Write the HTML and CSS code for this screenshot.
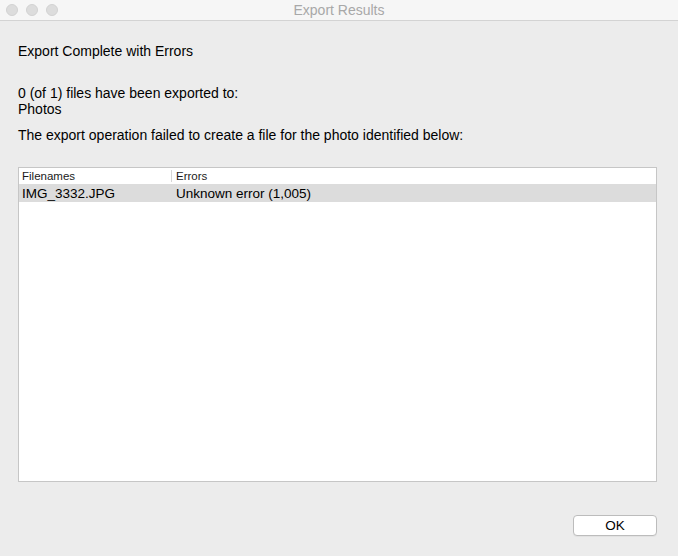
FILE: index.html
```html
<!DOCTYPE html>
<html>
<head>
<meta charset="utf-8">
<title>Export Results</title>
<link rel="stylesheet" href="styles.css">
</head>
<body>
<div class="window">
  <div class="titlebar">
    <div class="lights">
      <span class="light"></span>
      <span class="light"></span>
      <span class="light"></span>
    </div>
    <div class="title">Export Results</div>
  </div>
  <div class="content">
    <p class="heading">Export Complete with Errors</p>
    <p class="dest">0 (of 1) files have been exported to:<br>Photos</p>
    <p class="msg">The export operation failed to create a file for the photo identified below:</p>
    <div class="table">
      <div class="thead">
        <div class="col c1">Filenames</div>
        <div class="col c2">Errors</div>
      </div>
      <div class="row">
        <div class="col c1">IMG_3332.JPG</div>
        <div class="col c2">Unknown error (1,005)</div>
      </div>
    </div>
    <div class="actions">
      <button class="btn">OK</button>
    </div>
  </div>
</div>
</body>
</html>
```

FILE: styles.css
```css
* { box-sizing: border-box; }
html, body { margin: 0; padding: 0; }
body {
  background: #ececec;
  font-family: "Liberation Sans", Arial, sans-serif;
  font-size: 14px;
  line-height: 16px;
  color: #000;
}
.window {
  width: 678px;
  height: 556px;
  display: flex;
  flex-direction: column;
}
.titlebar {
  height: 21px;
  flex: none;
  background: #f6f6f6;
  border-bottom: 1px solid #d3d3d3;
  display: flex;
  align-items: center;
  position: relative;
}
.lights {
  display: flex;
  gap: 8px;
  padding-left: 6px;
  position: absolute;
  left: 0;
  top: 4px;
}
.light {
  width: 12px;
  height: 12px;
  border-radius: 50%;
  background: #dcdcdc;
  border: 1px solid #d2d2d2;
}
.title {
  flex: 1;
  text-align: center;
  color: #a8a8a8;
  font-size: 14px;
  line-height: 20px;
  padding-left: 0;
}
.content {
  flex: 1;
  display: flex;
  flex-direction: column;
  padding: 0 21px 0 18px;
}
p { margin: 0; }
.heading { margin-top: 22px; }
.dest { margin-top: 26px; }
.msg { margin-top: 10px; }
.table {
  margin-top: 24px;
  height: 315px;
  background: #fff;
  border: 1px solid #c6c6c6;
}
.thead {
  display: flex;
  height: 16px;
  font-size: 11.5px;
  line-height: 16px;
  color: #1a1a1a;
}
.thead .c2 {
  position: relative;
}
.thead .c2::before {
  content: "";
  position: absolute;
  left: 0;
  top: 2px;
  height: 12px;
  border-left: 1px solid #d6d6d6;
}
.row {
  display: flex;
  height: 18px;
  padding-top: 2px;
  background: #dcdcdc;
  font-size: 13.5px;
  line-height: 16px;
}
.col { white-space: nowrap; }
.c1 { width: 152px; padding-left: 3px; }
.c2 { flex: 1; padding-left: 5px; }
.actions {
  margin-top: 33px;
  display: flex;
  justify-content: flex-end;
}
.btn {
  width: 84px;
  height: 21px;
  background: #fff;
  border: 1px solid #bcbcbc;
  border-radius: 4px;
  font-family: "Liberation Sans", Arial, sans-serif;
  font-size: 13.5px;
  line-height: 17px;
  color: #000;
  padding: 0;
  box-shadow: 0 1px 0 rgba(0,0,0,0.04);
}
```
